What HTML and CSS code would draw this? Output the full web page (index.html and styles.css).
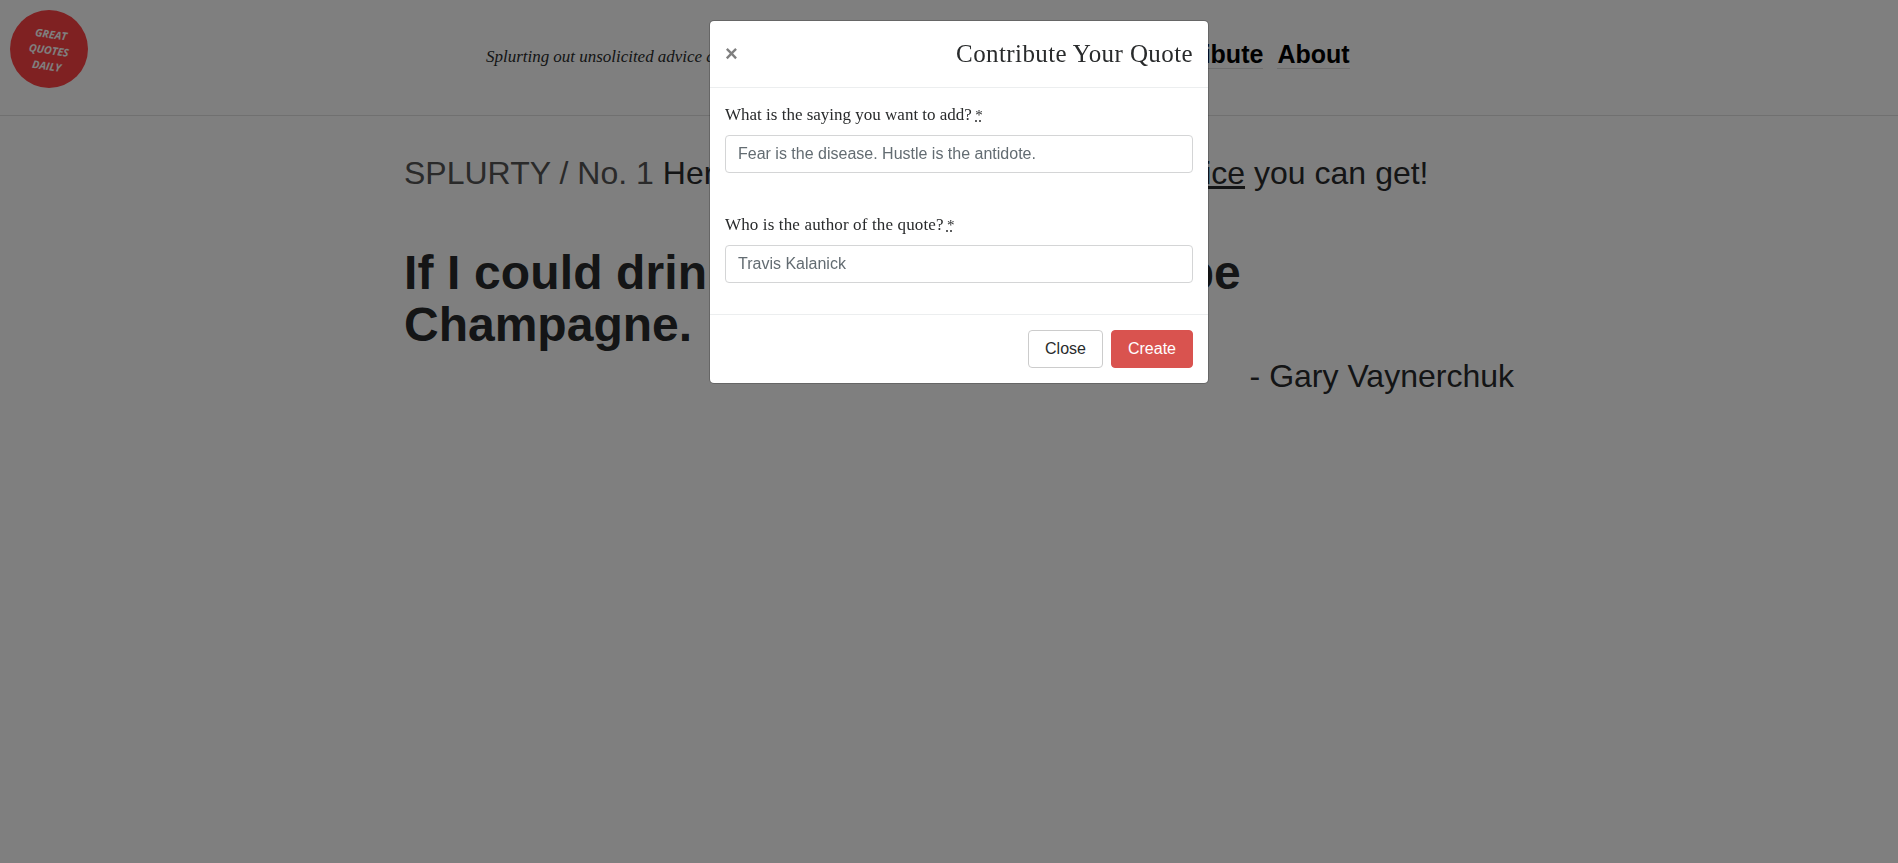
FILE: index.html
```html
<!DOCTYPE html>
<html lang="en">
<head>
<meta charset="utf-8">
<title>Splurty</title>
<link rel="stylesheet" href="styles.css">
</head>
<body>
<header class="site-header">
  <div class="logo"><div class="logo-text"><span>GREAT</span><span>QUOTES</span><span>DAILY</span></div></div>
  <p class="tagline">Splurting out unsolicited advice and quotes</p>
  <nav class="site-nav"><a href="#">Contribute</a><a href="#">About</a></nav>
</header>
<main class="content">
  <p class="intro"><span class="muted">SPLURTY / No. 1</span> Here is the best piece of business <a href="#">advice</a> you can get!</p>
  <h1 class="quote"><span class="quote-lead">If I could drink</span> one thing, it would be<br>Champagne.</h1>
  <p class="author">- Gary Vaynerchuk</p>
</main>
<div class="backdrop">
  <form class="modal">
    <div class="modal-header">
      <button type="button" class="dismiss">×</button>
      <h2 class="modal-title">Contribute Your Quote</h2>
    </div>
    <div class="modal-body">
      <div class="field">
        <label for="saying"><span>What is the saying you want to add?</span> <abbr title="required">*</abbr></label>
        <input id="saying" type="text" placeholder="Fear is the disease. Hustle is the antidote.">
      </div>
      <div class="field">
        <label for="author"><span class="author-label">Who is the author of the quote?</span> <abbr title="required">*</abbr></label>
        <input id="author" type="text" placeholder="Travis Kalanick">
      </div>
    </div>
    <div class="modal-footer">
      <button type="button" class="btn btn-close">Close</button>
      <button type="button" class="btn btn-create">Create</button>
    </div>
  </form>
</div>
</body>
</html>
```
FILE: styles.css
```css
*, *::before, *::after { box-sizing: border-box; }
html, body { height: 100%; }
body {
  margin: 0;
  overflow: hidden;
  background: #fff;
  color: #292b2c;
  font: 16px/24px "Liberation Sans", Arial, sans-serif;
}
p, h1, h2 { margin: 0; }

.site-header {
  display: flex;
  align-items: flex-start;
  height: 116px;
  padding: 10px 0 0 10px;
  border-bottom: 1px solid #e0e0e0;
}
.logo {
  display: flex;
  flex: none;
  align-items: center;
  justify-content: center;
  width: 78px;
  height: 78px;
  border-radius: 50%;
  background: #ff4245;
}
.logo-text {
  display: flex;
  flex-direction: column;
  align-items: center;
  padding: 2px 0 0 1px;
  transform: rotate(8deg);
  color: #fff;
  font: italic bold 10.7px/16px "Open Sans", sans-serif;
}
.tagline {
  width: 651px;
  margin: 35px 0 0 398px;
  font: italic 17px/24px "Liberation Serif", serif;
  letter-spacing: -0.02px;
  white-space: nowrap;
}
.site-nav {
  display: flex;
  gap: 14px;
  margin-top: 30px;
  font-size: 25px;
  font-weight: bold;
  line-height: 28px;
}
.site-nav a {
  color: #000;
  text-decoration: none;
  border-bottom: 1px solid #ddd;
}

.content {
  width: 1110px;
  margin: 38px 0 0 404px;
}
.intro {
  font-size: 32px;
  line-height: 38px;
  white-space: nowrap;
  word-spacing: 0.08px;
}
.intro .muted { color: #555; }
.intro a {
  color: inherit;
  text-decoration-thickness: 3px;
  text-underline-offset: 2px;
}
.quote {
  margin-top: 55px;
  font-size: 48px;
  line-height: 52px;
}
.quote-lead { letter-spacing: 0.13px; }
.author {
  margin-top: 1px;
  font-size: 32px;
  line-height: 48px;
  text-align: right;
}

.backdrop {
  position: fixed;
  inset: 0;
  padding: 20px 0 0 20px;
  background: rgba(0, 0, 0, .5);
}
.modal {
  width: 500px;
  margin: 0 auto;
  border: 1px solid rgba(0, 0, 0, .2);
  border-radius: 5px;
  background: #fff;
  background-clip: padding-box;
}
.modal-header {
  display: flex;
  align-items: center;
  justify-content: space-between;
  height: 67px;
  padding: 0 15px;
  border-bottom: 1px solid #eceeef;
}
.dismiss {
  padding: 0 0 1px;
  border: 0;
  background: none;
  color: #000;
  opacity: .5;
  font: bold 22px/24px "Liberation Sans", Arial, sans-serif;
}
.modal-title {
  font: 25px/36px "Liberation Serif", serif;
  letter-spacing: 0.4px;
}
.modal-body { padding: 15px 15px 31px; }
.field + .field { margin-top: 40px; }
.field label {
  display: block;
  height: 24px;
  margin-bottom: 8px;
  font: 17px/24px "Liberation Serif", serif;
}
.author-label { letter-spacing: 0.14px; }
.field abbr {
  margin-left: -1px;
  font-size: 15px;
  text-decoration: underline dotted;
}
.field input {
  display: block;
  width: 100%;
  height: 38px;
  padding: 6px 12px;
  border: 1px solid #d4d5d6;
  border-radius: 4px;
  color: #464a4c;
  font: 16px/20px "Liberation Sans", Arial, sans-serif;
}
.field input::placeholder { color: #636c72; opacity: 1; }
.modal-footer {
  display: flex;
  justify-content: flex-end;
  gap: 8px;
  padding: 15px;
  border-top: 1px solid #eceeef;
}
.btn {
  height: 38px;
  padding: 0;
  border-radius: 4px;
  font: 16px/20px "Liberation Sans", Arial, sans-serif;
}
.btn-close { width: 75px; border: 1px solid #ccc; background: #fff; color: #292b2c; }
.btn-create { width: 82px; border: 1px solid #d9534f; background: #d9534f; color: #fff; }
```
